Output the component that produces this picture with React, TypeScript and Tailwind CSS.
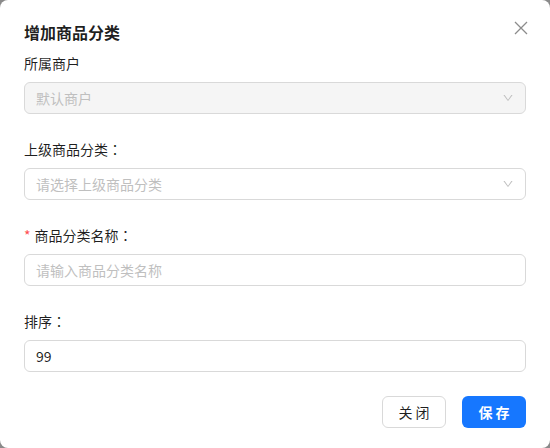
import React from "react";

const Chevron = () => (
  <svg width="12" height="12" viewBox="0 0 1024 1024" fill="#bfbfbf">
    <path d="M884 256h-75c-5.1 0-9.9 2.5-12.9 6.6L512 654.2 227.9 262.6c-3-4.1-7.8-6.6-12.9-6.6h-75c-6.5 0-10.3 7.4-6.5 12.7l352.6 486.1c12.8 17.6 39 17.6 51.7 0l352.6-486.1c3.9-5.3.1-12.7-6.4-12.7z" />
  </svg>
);

const Colon = () => (
  <span style={{ fontFamily: '"Noto Sans CJK TC", sans-serif' }}>：</span>
);

const Field = ({ label, colon, required, children }: { label: string; colon?: boolean; required?: boolean; children: React.ReactNode }) => (
  <div className="mb-6 flex flex-col">
    <div className="h-[22px] leading-[22px] mb-2 text-[14px] text-[rgba(0,0,0,0.88)] flex items-center">
      {required && <span className="text-[#ff4d4f] mr-1 text-[14px] leading-none">*</span>}
      {label}
      {colon && <Colon />}
    </div>
    {children}
  </div>
);

export default function App() {
  return (
    <div
      className="w-[550px] h-[448px] bg-[#8a8a8a]"
      style={{ fontFamily: '"Noto Sans CJK SC", "Noto Sans", sans-serif' }}
    >
      <div className="w-full h-full bg-white rounded-lg px-6 pt-5 pb-5 flex flex-col relative">
        <button className="absolute right-[18px] top-[17px] w-[22px] h-[22px] flex items-center justify-center">
          <svg width="14" height="14" viewBox="0 0 14 14" stroke="#8c8c8c" strokeWidth="1.3" fill="none">
            <path d="M1 1 L13 13 M13 1 L1 13" />
          </svg>
        </button>
        <div className="text-[16px] leading-6 font-semibold text-[rgba(0,0,0,0.88)] mb-2">增加商品分类</div>
        <Field label="所属商户">
          <div className="h-8 rounded-md border border-[#d9d9d9] bg-[#f5f5f5] flex items-center justify-between px-[11px]">
            <span className="text-[14px] text-[#bfbfbf]">默认商户</span>
            <Chevron />
          </div>
        </Field>
        <Field label="上级商品分类" colon>
          <div className="h-8 rounded-md border border-[#d9d9d9] bg-white flex items-center justify-between px-[11px]">
            <span className="text-[14px] text-[#bfbfbf]">请选择上级商品分类</span>
            <Chevron />
          </div>
        </Field>
        <Field label="商品分类名称" colon required>
          <div className="h-8 rounded-md border border-[#d9d9d9] bg-white flex items-center px-[11px]">
            <span className="text-[14px] text-[#bfbfbf]">请输入商品分类名称</span>
          </div>
        </Field>
        <Field label="排序" colon>
          <div className="h-8 rounded-md border border-[#d9d9d9] bg-white flex items-center px-[11px]">
            <span className="text-[14px] text-[rgba(0,0,0,0.88)]">99</span>
          </div>
        </Field>
        <div className="flex justify-end gap-4">
          <button className="w-16 h-8 rounded-md border border-[#d9d9d9] bg-white text-[14px] text-[rgba(0,0,0,0.88)]">关 闭</button>
          <button className="w-16 h-8 rounded-md bg-[#1677ff] text-white text-[14px] font-semibold">保 存</button>
        </div>
      </div>
    </div>
  );
}
